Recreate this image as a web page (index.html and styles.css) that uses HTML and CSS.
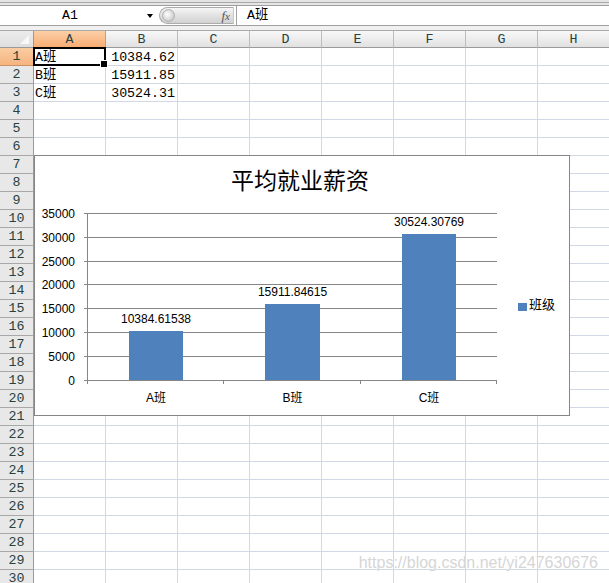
FILE: index.html
```html
<!DOCTYPE html>
<html>
<head>
<meta charset="utf-8">
<link rel="stylesheet" href="styles.css">
</head>
<body>
<div class="app">
  <div class="topstrip"></div>
  <div class="fbar">
    <div class="namebox">A1</div>
    <div class="dd"></div>
    <div class="pill"><span class="knob"></span><span class="fx">f<span class="fxx">x</span></span></div>
    <div class="formula">A班</div>
  </div>
  <div class="spacer"></div>
  <div class="sheet">
    <div class="corner"></div><div class="ch sel">A</div><div class="ch">B</div><div class="ch">C</div><div class="ch">D</div><div class="ch">E</div><div class="ch">F</div><div class="ch">G</div><div class="ch">H</div>
    <div class="rh sel">1</div><div class="c active">A班</div><div class="c num">10384.62</div><div class="c"></div><div class="c"></div><div class="c"></div><div class="c"></div><div class="c"></div><div class="c"></div>
    <div class="rh">2</div><div class="c">B班</div><div class="c num">15911.85</div><div class="c"></div><div class="c"></div><div class="c"></div><div class="c"></div><div class="c"></div><div class="c"></div>
    <div class="rh">3</div><div class="c">C班</div><div class="c num">30524.31</div><div class="c"></div><div class="c"></div><div class="c"></div><div class="c"></div><div class="c"></div><div class="c"></div>
    <div class="rh">4</div><div class="c"></div><div class="c"></div><div class="c"></div><div class="c"></div><div class="c"></div><div class="c"></div><div class="c"></div><div class="c"></div>
    <div class="rh">5</div><div class="c"></div><div class="c"></div><div class="c"></div><div class="c"></div><div class="c"></div><div class="c"></div><div class="c"></div><div class="c"></div>
    <div class="rh">6</div><div class="c"></div><div class="c"></div><div class="c"></div><div class="c"></div><div class="c"></div><div class="c"></div><div class="c"></div><div class="c"></div>
    <div class="rh">7</div><div class="c"></div><div class="c"></div><div class="c"></div><div class="c"></div><div class="c"></div><div class="c"></div><div class="c"></div><div class="c"></div>
    <div class="rh">8</div><div class="c"></div><div class="c"></div><div class="c"></div><div class="c"></div><div class="c"></div><div class="c"></div><div class="c"></div><div class="c"></div>
    <div class="rh">9</div><div class="c"></div><div class="c"></div><div class="c"></div><div class="c"></div><div class="c"></div><div class="c"></div><div class="c"></div><div class="c"></div>
    <div class="rh">10</div><div class="c"></div><div class="c"></div><div class="c"></div><div class="c"></div><div class="c"></div><div class="c"></div><div class="c"></div><div class="c"></div>
    <div class="rh">11</div><div class="c"></div><div class="c"></div><div class="c"></div><div class="c"></div><div class="c"></div><div class="c"></div><div class="c"></div><div class="c"></div>
    <div class="rh">12</div><div class="c"></div><div class="c"></div><div class="c"></div><div class="c"></div><div class="c"></div><div class="c"></div><div class="c"></div><div class="c"></div>
    <div class="rh">13</div><div class="c"></div><div class="c"></div><div class="c"></div><div class="c"></div><div class="c"></div><div class="c"></div><div class="c"></div><div class="c"></div>
    <div class="rh">14</div><div class="c"></div><div class="c"></div><div class="c"></div><div class="c"></div><div class="c"></div><div class="c"></div><div class="c"></div><div class="c"></div>
    <div class="rh">15</div><div class="c"></div><div class="c"></div><div class="c"></div><div class="c"></div><div class="c"></div><div class="c"></div><div class="c"></div><div class="c"></div>
    <div class="rh">16</div><div class="c"></div><div class="c"></div><div class="c"></div><div class="c"></div><div class="c"></div><div class="c"></div><div class="c"></div><div class="c"></div>
    <div class="rh">17</div><div class="c"></div><div class="c"></div><div class="c"></div><div class="c"></div><div class="c"></div><div class="c"></div><div class="c"></div><div class="c"></div>
    <div class="rh">18</div><div class="c"></div><div class="c"></div><div class="c"></div><div class="c"></div><div class="c"></div><div class="c"></div><div class="c"></div><div class="c"></div>
    <div class="rh">19</div><div class="c"></div><div class="c"></div><div class="c"></div><div class="c"></div><div class="c"></div><div class="c"></div><div class="c"></div><div class="c"></div>
    <div class="rh">20</div><div class="c"></div><div class="c"></div><div class="c"></div><div class="c"></div><div class="c"></div><div class="c"></div><div class="c"></div><div class="c"></div>
    <div class="rh">21</div><div class="c"></div><div class="c"></div><div class="c"></div><div class="c"></div><div class="c"></div><div class="c"></div><div class="c"></div><div class="c"></div>
    <div class="rh">22</div><div class="c"></div><div class="c"></div><div class="c"></div><div class="c"></div><div class="c"></div><div class="c"></div><div class="c"></div><div class="c"></div>
    <div class="rh">23</div><div class="c"></div><div class="c"></div><div class="c"></div><div class="c"></div><div class="c"></div><div class="c"></div><div class="c"></div><div class="c"></div>
    <div class="rh">24</div><div class="c"></div><div class="c"></div><div class="c"></div><div class="c"></div><div class="c"></div><div class="c"></div><div class="c"></div><div class="c"></div>
    <div class="rh">25</div><div class="c"></div><div class="c"></div><div class="c"></div><div class="c"></div><div class="c"></div><div class="c"></div><div class="c"></div><div class="c"></div>
    <div class="rh">26</div><div class="c"></div><div class="c"></div><div class="c"></div><div class="c"></div><div class="c"></div><div class="c"></div><div class="c"></div><div class="c"></div>
    <div class="rh">27</div><div class="c"></div><div class="c"></div><div class="c"></div><div class="c"></div><div class="c"></div><div class="c"></div><div class="c"></div><div class="c"></div>
    <div class="rh">28</div><div class="c"></div><div class="c"></div><div class="c"></div><div class="c"></div><div class="c"></div><div class="c"></div><div class="c"></div><div class="c"></div>
    <div class="rh">29</div><div class="c"></div><div class="c"></div><div class="c"></div><div class="c"></div><div class="c"></div><div class="c"></div><div class="c"></div><div class="c"></div>
    <div class="rh">30</div><div class="c"></div><div class="c"></div><div class="c"></div><div class="c"></div><div class="c"></div><div class="c"></div><div class="c"></div><div class="c"></div>
  </div>

  <div class="chart">
    <svg class="chart-svg" width="534" height="259" viewBox="35 156 534 259">
      <text class="title" x="300" y="189" text-anchor="middle">平均就业薪资</text>
      <g stroke="#868686" stroke-width="1" fill="none">
        <line x1="84" y1="213.5" x2="497" y2="213.5"/>
        <line x1="84" y1="237.5" x2="497" y2="237.5"/>
        <line x1="84" y1="261.5" x2="497" y2="261.5"/>
        <line x1="84" y1="284.5" x2="497" y2="284.5"/>
        <line x1="84" y1="308.5" x2="497" y2="308.5"/>
        <line x1="84" y1="332.5" x2="497" y2="332.5"/>
        <line x1="84" y1="356.5" x2="497" y2="356.5"/>
      </g>
      <g fill="#4f81bd">
        <rect x="129" y="331" width="54" height="49"/>
        <rect x="265" y="304" width="55" height="76"/>
        <rect x="402" y="234" width="54" height="146"/>
      </g>
      <g stroke="#868686" stroke-width="1" fill="none">
        <line x1="87.5" y1="213" x2="87.5" y2="384"/>
        <line x1="84" y1="380.5" x2="497" y2="380.5"/>
        <line x1="223.5" y1="380" x2="223.5" y2="384"/>
        <line x1="360.5" y1="380" x2="360.5" y2="384"/>
        <line x1="496.5" y1="380" x2="496.5" y2="384"/>
      </g>
      <g class="axis" text-anchor="end">
        <text x="75" y="217.5">35000</text>
        <text x="75" y="241.5">30000</text>
        <text x="75" y="265.5">25000</text>
        <text x="75" y="288.5">20000</text>
        <text x="75" y="312.5">15000</text>
        <text x="75" y="336.5">10000</text>
        <text x="75" y="360.5">5000</text>
        <text x="75" y="384.5">0</text>
      </g>
      <g class="axis" text-anchor="middle">
        <text x="156" y="322.5">10384.61538</text>
        <text x="292.5" y="295.5">15911.84615</text>
        <text x="429" y="225.5">30524.30769</text>
        <text x="156" y="402">A班</text>
        <text x="292.5" y="402">B班</text>
        <text x="429" y="402">C班</text>
      </g>
      <rect x="518" y="303" width="9" height="8" fill="#4f81bd"/>
      <text class="legend" x="529" y="308.5">班级</text>
    </svg>
  </div>

  <div class="watermark">https://blog.csdn.net/yi247630676</div>
</div>
</body>
</html>
```

FILE: styles.css
```css
* { box-sizing: border-box; margin: 0; padding: 0; }

body {
  margin: 0;
  background: #fff;
  font-family: "Liberation Mono", "Noto Sans CJK SC", monospace;
  font-size: 13.3px;
  color: #000;
}

.app {
  position: relative;
  width: 609px;
  height: 583px;
  overflow: hidden;
  background: #fff;
}

.topstrip {
  height: 6px;
  background: linear-gradient(#e3e3e3 0 2px, #a9a9a9 2px 3px, #e6e6e6 3px 5px, #9d9d9d 5px 6px);
}

.fbar {
  display: flex;
  align-items: center;
  height: 20px;
  background: #fff;
  border-bottom: 1px solid #a0a0a0;
}

.namebox {
  width: 140px;
  text-align: center;
  line-height: 19px;
}

.dd {
  width: 19px;
  height: 19px;
  display: flex;
  align-items: center;
  justify-content: center;
}

.dd::before {
  content: "";
  border-left: 3px solid transparent;
  border-right: 3px solid transparent;
  border-top: 4px solid #000;
}

.pill {
  width: 75px;
  height: 17px;
  border: 1px solid #ababab;
  border-right-color: #c8c8c8;
  border-radius: 9px 0 0 9px;
  background: linear-gradient(#f6f6f6, #e2e2e2 50%, #d2d2d2);
  display: flex;
  align-items: center;
  justify-content: space-between;
  padding: 0 3px 0 2px;
}

.knob {
  width: 13px;
  height: 13px;
  border-radius: 50%;
  border: 1px solid #b0b0b0;
  background: radial-gradient(circle at 40% 40%, #ffffff, #d6d6d6 60%, #bdbdbd);
}

.fx {
  font-family: "Liberation Serif", serif;
  font-style: italic;
  font-size: 13px;
  color: #555;
  line-height: 15px;
}

.fxx {
  font-size: 11px;
}

.formula {
  flex: 1;
  height: 19px;
  margin-left: 2px;
  padding-left: 10px;
  border-left: 1px solid #a0a0a0;
  line-height: 19px;
}

.spacer {
  height: 4px;
  background: #f0f0f0;
}

.sheet {
  display: grid;
  grid-template-columns: 34px repeat(8, 72px);
  grid-template-rows: 17px;
  grid-auto-rows: 18px;
  border-top: 1px solid #a9a9a9;
}

.corner {
  position: relative;
  background: linear-gradient(#ececec, #dedede);
  border-right: 1px solid #9a9a9a;
  border-bottom: 1px solid #9a9a9a;
}

.corner::after {
  content: "";
  position: absolute;
  right: 4px;
  bottom: 3px;
  border-left: 9px solid transparent;
  border-bottom: 9px solid #f8f8f8;
}

.ch {
  background: linear-gradient(#f8f8f8, #e1e1e1);
  border-right: 1px solid #bcbcbc;
  border-bottom: 1px solid #9a9a9a;
  text-align: center;
  color: #27413e;
  line-height: 17px;
}

.ch.sel {
  background: linear-gradient(#fcd0a8, #f8ac72);
  border-right-color: #d89766;
  border-bottom-color: #c48a5a;
}

.rh {
  background: #e8e8e8;
  border-right: 1px solid #9a9a9a;
  border-bottom: 1px solid #a8a8a8;
  text-align: center;
  color: #27413e;
  line-height: 18px;
}

.rh.sel {
  background: linear-gradient(#f9cda2, #f6b47f);
  border-bottom-color: #c89368;
}

.c {
  position: relative;
  border-right: 1px solid #d0d7e5;
  border-bottom: 1px solid #d0d7e5;
  line-height: 19px;
  padding: 0 2px 0 1px;
  white-space: nowrap;
}

.num {
  text-align: right;
}

.c.active::after {
  content: "";
  position: absolute;
  top: -1px;
  left: -1px;
  right: -1px;
  bottom: -1px;
  border: 2px solid #000;
}

.c.active::before {
  content: "";
  position: absolute;
  right: -3px;
  bottom: -3px;
  width: 6px;
  height: 6px;
  background: #000;
  border: 1px solid #fff;
  z-index: 1;
}

.chart {
  position: absolute;
  left: 34px;
  top: 155px;
  width: 536px;
  height: 261px;
  border: 1px solid #868686;
  background: #fff;
}

.chart-svg {
  display: block;
}

.title {
  font-family: "Noto Sans CJK SC", sans-serif;
  font-size: 23px;
  fill: #000;
}

.axis {
  font-family: "Liberation Sans", "Noto Sans CJK SC", sans-serif;
  font-size: 12px;
  fill: #000;
}

.legend {
  font-family: "Noto Sans CJK SC", sans-serif;
  font-size: 13px;
  fill: #000;
}

.watermark {
  position: absolute;
  right: 11px;
  top: 555px;
  font-family: "Liberation Sans", sans-serif;
  font-size: 16px;
  line-height: 16px;
  color: #d6d6d6;
  text-shadow: 0 0 1px #fff;
}
```
